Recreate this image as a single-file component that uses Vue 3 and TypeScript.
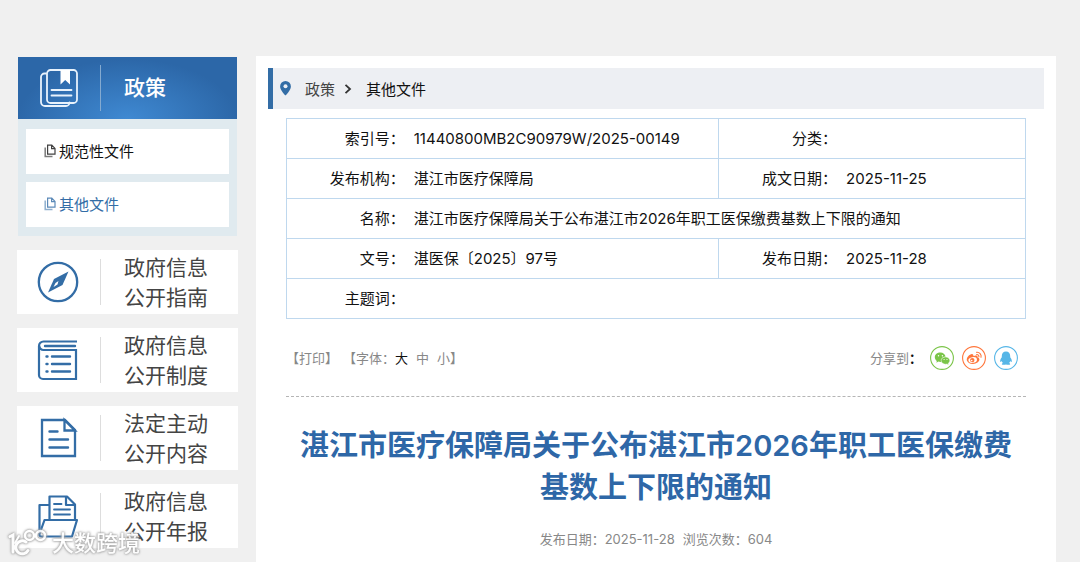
<script setup lang="ts">
import { ref } from 'vue'

type FontSize = 'large' | 'medium' | 'small'

interface GuideCard {
  icon: 'compass' | 'book' | 'page' | 'folder'
  lines: [string, string]
}

const policyLinks: { label: string; active: boolean }[] = [
  { label: '规范性文件', active: false },
  { label: '其他文件', active: true },
]

const cards: GuideCard[] = [
  { icon: 'compass', lines: ['政府信息', '公开指南'] },
  { icon: 'book', lines: ['政府信息', '公开制度'] },
  { icon: 'page', lines: ['法定主动', '公开内容'] },
  { icon: 'folder', lines: ['政府信息', '公开年报'] },
]

const sizes: { key: FontSize; label: string }[] = [
  { key: 'large', label: '大' },
  { key: 'medium', label: '中' },
  { key: 'small', label: '小' },
]
const fontSize = ref<FontSize>('large')

const printPage = (): void => window.print()
</script>

<template>
  <div class="page">
    <aside class="sidebar">
      <section class="policy">
        <h2 class="policy-head">
          <span class="icon-cell">
            <svg width="40" height="40" viewBox="0 0 40 40" fill="none" stroke="#e8f2fc" stroke-width="1.8" stroke-linecap="round">
              <path d="M7 5.500H5.500a3.500 3.500 0 0 0-3.500 3.500V34a4 4 0 0 0 4 4H27a3.500 3.500 0 0 0 3.500-3.500" />
              <rect x="8" y="2" width="30" height="33" rx="3.500" />
              <path d="M21.500 2h9.500v14.500l-4.800-4.500-4.700 4.500z" fill="#fff" stroke="none" />
              <path d="M12.500 22h20M12.500 27.500h20" />
            </svg>
          </span>
          <span class="policy-title">政策</span>
        </h2>
        <nav class="policy-list">
          <a v-for="link in policyLinks" :key="link.label" href="#" class="policy-link" :class="{ active: link.active }">
            <svg width="12" height="14" viewBox="0 0 12 14" fill="none" stroke="currentColor" stroke-width="1.200">
              <path d="M3.600 1.200H7.800L11 4.400V10.200H3.600zM7.600 1.200V4.600H11" opacity=".8" />
              <path d="M1.200 3.500V12.600H8.500" stroke-width="1.500" opacity=".55" />
            </svg>
            {{ link.label }}
          </a>
        </nav>
      </section>

      <a v-for="card in cards" :key="card.icon" href="#" class="card">
        <span class="icon-cell">
          <svg v-if="card.icon === 'compass'" width="42" height="42" viewBox="0 0 42 42" fill="none" stroke="#336da6">
            <circle cx="21" cy="21" r="19.200" stroke-width="2.300" />
            <path d="M31.500 10.500 25.500 24 11 31.500 17 18z" fill="#336da6" stroke="none" />
            <path d="M21.500 20 20.500 23.500 16.500 26 18.500 22z" fill="#fff" stroke="none" />
          </svg>
          <svg v-else-if="card.icon === 'book'" width="42" height="42" viewBox="0 0 42 42" fill="none" stroke="#336da6" stroke-width="2.200">
            <path d="M40 2.500H6.500a4.500 4.500 0 0 0-4.500 4.500V36a4 4 0 0 0 4 4H39V11H6.500a4.200 4.200 0 0 1-4.200-4.200" />
            <path d="M8 7H38" stroke-width="2.400" stroke-linecap="round" />
            <path d="M9.500 17.500h1M15 17.500H33M9.500 25h1M15 25H33M9.500 32.500h1M15 32.500H33" stroke-width="2.400" stroke-linecap="round" />
          </svg>
          <svg v-else-if="card.icon === 'page'" width="42" height="42" viewBox="0 0 42 42" fill="none" stroke="#336da6" stroke-width="2.300">
            <path d="M5 3H28L38 13V39H5z" />
            <path d="M27.500 3V13.500H38z" />
            <path d="M12.500 14.500h8M12.500 22.500H31M12.500 30.500H31" stroke-width="2.400" stroke-linecap="round" />
          </svg>
          <svg v-else width="42" height="44" viewBox="0 0 42 44" fill="none" stroke="#336da6" stroke-width="2.200" stroke-linejoin="round">
            <path d="M2.500 38V11H12M12.500 25V2.500H30L38 10.500V25.500" />
            <path d="M29 2.500V11H37.500" />
            <path d="M17 10h7.500M17 15.500H33M17 20.500H33" stroke-linecap="round" stroke-width="1.800" />
            <path d="M7.500 26H40L35 42.500H4.500Q2 42.500 2.500 40z" />
          </svg>
        </span>
        <span class="card-text">{{ card.lines[0] }}<br />{{ card.lines[1] }}</span>
      </a>
    </aside>

    <main class="content">
      <nav class="crumbs">
        <svg width="11" height="15" viewBox="0 0 11 15">
          <path d="M5.500 0A5.400 5.400 0 0 0 .1 5.400C.1 9.300 5.500 14.500 5.500 14.500S10.900 9.300 10.900 5.400A5.400 5.400 0 0 0 5.500 0z" fill="#336da6" />
          <circle cx="5.500" cy="5.300" r="2" fill="#edeff3" />
        </svg>
        <a href="#">政策</a>
        <svg class="chevron" width="8" height="10" viewBox="0 0 8 10" fill="none" stroke="#333" stroke-width="1.800">
          <path d="M1.500 .8 6 5 1.500 9.200" />
        </svg>
        <a href="#" class="current">其他文件</a>
      </nav>

      <article class="article">
        <table class="meta">
          <colgroup>
            <col class="col-label" />
            <col class="col-wide" />
            <col class="col-label" />
            <col />
          </colgroup>
          <tbody>
            <tr>
              <th scope="row">索引号：</th>
              <td>11440800MB2C90979W/2025-00149</td>
              <th scope="row" class="split">分类：</th>
              <td></td>
            </tr>
            <tr>
              <th scope="row">发布机构：</th>
              <td>湛江市医疗保障局</td>
              <th scope="row" class="split">成文日期：</th>
              <td>2025-11-25</td>
            </tr>
            <tr>
              <th scope="row">名称：</th>
              <td colspan="3">湛江市医疗保障局关于公布湛江市2026年职工医保缴费基数上下限的通知</td>
            </tr>
            <tr>
              <th scope="row">文号：</th>
              <td>湛医保〔2025〕97号</td>
              <th scope="row" class="split">发布日期：</th>
              <td>2025-11-28</td>
            </tr>
            <tr>
              <th scope="row">主题词：</th>
              <td colspan="3"></td>
            </tr>
          </tbody>
        </table>

        <div class="tools">
          <div class="tool-group">
            <button type="button" class="print" @click="printPage">【打印】</button>
            <span>【字体：</span>
            <span class="sizes">
              <button
                v-for="size in sizes"
                :key="size.key"
                type="button"
                :class="{ chosen: fontSize === size.key }"
                @click="fontSize = size.key"
              >{{ size.label }}</button>
            </span>
            <span>】</span>
          </div>
          <div class="share">
            <span>分享到<b>：</b></span>
            <a href="#" aria-label="微信">
              <svg width="24" height="24" viewBox="0 0 24 24">
                <circle cx="12" cy="12" r="11.400" fill="#fff" stroke="#7bc549" stroke-width="1.100" />
                <path d="M10.500 6.500c-3.300 0-5.700 2-5.700 4.700 0 1.500.8 2.800 2 3.700l-.4 1.800 2-1.100 2 .4h.9a4 4 0 0 1 4.300-5.300C15.200 8.300 13 6.500 10.500 6.500z" fill="#7bc549" />
                <path d="M15.500 11c-2.500 0-4.400 1.600-4.400 3.600s1.900 3.600 4.400 3.600l1.500-.2 1.500.9-.3-1.500c1-.7 1.600-1.700 1.600-2.800 0-2-1.900-3.600-4.300-3.600z" fill="#7bc549" stroke="#fff" stroke-width=".4" />
                <g fill="#fff"><circle cx="8.500" cy="9.800" r=".7" /><circle cx="12.400" cy="9.800" r=".7" /><circle cx="14.100" cy="13.500" r=".6" /><circle cx="17" cy="13.500" r=".6" /></g>
              </svg>
            </a>
            <a href="#" aria-label="微博">
              <svg width="24" height="24" viewBox="0 0 24 24">
                <circle cx="12" cy="12" r="11.400" fill="#fff" stroke="#ff763b" stroke-width="1.100" />
                <path d="M10.800 8.400c-1-.9-3.200.3-4.600 1.900-1.300 1.400-1.700 2.900-1.300 4.200.6 1.900 2.900 3.400 6 3.400 3.700 0 6.500-2.200 6.500-4.400 0-1.300-.9-2-2-2.300.5-1.300 0-2.200-2.800-1.400-1.200.4-1.300.2-1.200-.2.100-.5 0-.9-.6-1.200z" fill="#ff763b" />
                <ellipse cx="10.700" cy="14" rx="4.300" ry="2.800" fill="#fff" transform="rotate(-8 10.700 14)" />
                <circle cx="10.300" cy="14.100" r="2.200" fill="#ff763b" />
                <circle cx="9.700" cy="14.600" r=".8" fill="#fff" />
                <path d="M14.500 6.300a4 4 0 0 1 4.500 5M14.600 8.500a2 2 0 0 1 2.300 2.300" fill="none" stroke="#ff763b" stroke-width="1.100" stroke-linecap="round" />
              </svg>
            </a>
            <a href="#" aria-label="QQ">
              <svg width="24" height="24" viewBox="0 0 24 24">
                <circle cx="12" cy="12" r="11.400" fill="#fff" stroke="#56b6e7" stroke-width="1.100" />
                <path d="M12 5.500c-2.700 0-4.200 1.900-4.200 4.400v1.300c-1 1.200-1.800 2.800-1.600 4.400.2.800.9.200 1.500-.6.200.8.600 1.400 1.200 2-.8.300-1.200.7-1.100 1.200.2.800 3 .9 4.200.2 1.200.7 4 .6 4.200-.2.100-.5-.3-.9-1.100-1.200.6-.6 1-1.200 1.200-2 .6.800 1.300 1.400 1.500.6.200-1.600-.6-3.200-1.600-4.400V9.900c0-2.500-1.500-4.400-4.200-4.400z" fill="#56b6e7" />
              </svg>
            </a>
          </div>
        </div>

        <h1 class="title">湛江市医疗保障局关于公布湛江市2026年职工医保缴费基数上下限的通知</h1>
        <p class="byline"><span>发布日期：2025-11-28</span><span>浏览次数：604</span></p>
      </article>
    </main>

    <div class="watermark">
      <svg width="40" height="30" viewBox="0 0 40 30" fill="none" stroke="#fff" stroke-width="3" stroke-linecap="round">
        <path d="M2 8.500 5 7V24M18 14A6.500 6.500 0 1 0 20 22.500" />
        <path d="M11 8 7 15" stroke-width="2" />
        <circle cx="21.500" cy="7.500" r="4.500" stroke-width="2.500" />
        <circle cx="32.500" cy="7.500" r="4.500" stroke-width="2.500" />
      </svg>
      <span>大数跨境</span>
    </div>
  </div>
</template>

<style>
body {
  margin: 0;
  background: #f0f0f0;
}
</style>

<style scoped>
.page {
  position: relative;
  box-sizing: border-box;
  height: 100vh;
  overflow: hidden;
  display: flex;
  align-items: flex-start;
  gap: 18px;
  padding: 56px 24px 0 17px;
  background: #f0f0f0;
  color: #111;
  font-family: Inter, "Noto Sans CJK SC", sans-serif;
  font-size: 15px;
}
a {
  color: inherit;
  text-decoration: none;
}
button {
  padding: 0;
  border: 0;
  background: none;
  color: inherit;
  font: inherit;
  cursor: pointer;
}
svg {
  display: block;
  flex: none;
}
.sidebar {
  flex: 0 0 221px;
  display: flex;
  flex-direction: column;
  gap: 14px;
}
.policy {
  margin: 1px 1px 0;
  background: #e0eaef;
}
.policy-head {
  display: flex;
  align-items: center;
  height: 62px;
  margin: 0;
  background: radial-gradient(ellipse 110px 60px at 50% 100%, #3f89d2, #2c67a8);
  color: #fff;
  font-size: 21px;
  line-height: 30px;
  font-weight: 500;
}
.icon-cell {
  flex: 0 0 83px;
  box-sizing: border-box;
  height: 46px;
  display: flex;
  align-items: center;
  justify-content: center;
  padding-right: 1px;
  border-right: 1px solid #84aad0;
}
.policy-title {
  padding-left: 23px;
}
.policy-list {
  display: flex;
  flex-direction: column;
  gap: 8px;
  padding: 10px 8px 9px;
}
.policy-link {
  display: flex;
  align-items: center;
  gap: 3px;
  box-sizing: border-box;
  height: 45px;
  padding: 0 0 2px 18px;
  background: #fff;
}
.policy-link.active {
  color: #336da6;
}
.card {
  display: flex;
  align-items: center;
  height: 64px;
  background: #fff;
  color: #444;
  font-size: 21px;
  line-height: 30px;
}
.card .icon-cell {
  flex-basis: 84px;
  border-color: #ddd;
}
.card-text {
  padding: 2px 0 0 23px;
}
.content {
  flex: 1;
  min-width: 0;
  box-sizing: border-box;
  min-height: 506px;
  padding: 12px 12px 0;
  background: #fff;
}
.crumbs {
  display: flex;
  align-items: center;
  height: 41px;
  padding-left: 7px;
  border-left: 5px solid #336da6;
  background: #edeff3;
  color: #444;
}
.crumbs a {
  margin-left: 14px;
}
.chevron {
  margin-left: 9px;
}
.crumbs .current {
  color: #111;
}
.article {
  padding: 9px 18px 0;
}
.meta {
  width: 100%;
  table-layout: fixed;
  border-collapse: collapse;
  border: 1px solid #bfd8ee;
}
.col-label {
  width: 16%;
}
.col-wide {
  width: 42.5%;
}
.meta tr {
  height: 40px;
  border-bottom: 1px solid #bfd8ee;
}
.meta th,
.meta td {
  box-sizing: border-box;
  padding: 0;
  line-height: 24px;
  text-align: left;
  font-weight: 400;
  white-space: nowrap;
}
.meta th {
  text-align: right;
}
.meta td {
  padding-left: 9px;
}
.meta .split {
  border-left: 1px solid #bfd8ee;
}
.tools {
  display: flex;
  align-items: center;
  justify-content: space-between;
  height: 77px;
  padding-right: 8px;
  border-bottom: 1px dashed #b5b5b5;
  color: #888;
  font-size: 13px;
}
.tool-group,
.share {
  display: flex;
  align-items: center;
}
.print {
  margin-right: 5px;
}
.sizes {
  display: flex;
  gap: 8px;
}
.chosen {
  color: #111;
}
.share {
  gap: 8px;
}
.share b {
  color: #111;
}
.title {
  margin: 28px 0 0;
  color: #2e67a7;
  font-size: 29px;
  line-height: 42px;
  font-weight: 600;
  text-align: center;
}
.byline {
  display: flex;
  justify-content: center;
  gap: 8px;
  margin: 20px 0 0;
  color: #888;
  font-size: 13px;
  line-height: 20px;
}
.watermark {
  position: absolute;
  left: 8px;
  bottom: 4px;
  display: flex;
  align-items: center;
  gap: 4px;
  color: #fff;
  font-size: 22px;
  line-height: 30px;
  font-weight: 500;
  filter: drop-shadow(0 0 1px #999) drop-shadow(0 0 1px #aaa);
  opacity: 0.9;
}
</style>
